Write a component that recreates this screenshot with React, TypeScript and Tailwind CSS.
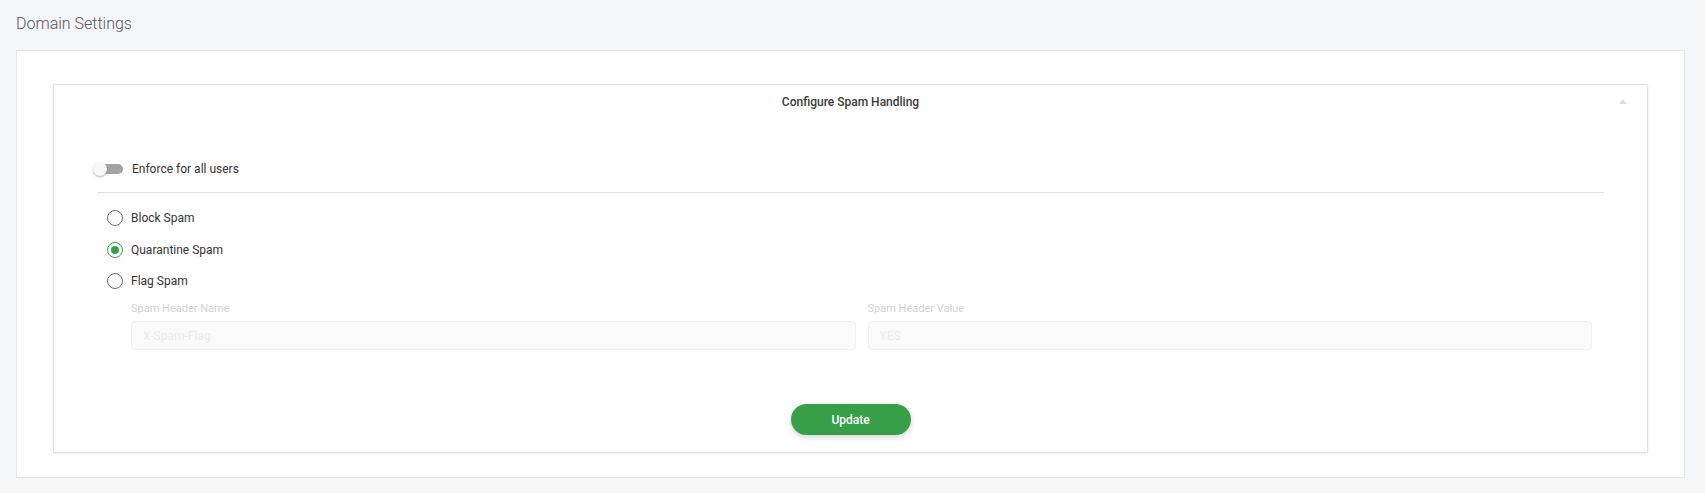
import { useState } from "react";

type SpamMode = "block" | "quarantine" | "flag";

const options: { value: SpamMode; label: string }[] = [
  { value: "block", label: "Block Spam" },
  { value: "quarantine", label: "Quarantine Spam" },
  { value: "flag", label: "Flag Spam" },
];

function Toggle({ on, onChange }: { on: boolean; onChange: (v: boolean) => void }) {
  return (
    <button
      type="button"
      onClick={() => onChange(!on)}
      className={
        "relative w-[26px] h-[10px] rounded-full " +
        (on ? "bg-[#8fce98]" : "bg-[#a3a3a3]")
      }
    >
      <span
        className={
          "absolute top-[-2px] w-[14px] h-[14px] rounded-full shadow-[0_1px_2px_rgba(0,0,0,0.3)] " +
          (on ? "left-[16px] bg-[#379f47]" : "left-[-4px] bg-[#f8f8f8]")
        }
      />
    </button>
  );
}

function Radio({ checked }: { checked: boolean }) {
  return (
    <span
      className={
        "flex items-center justify-center w-[16px] h-[16px] rounded-full border-[1.5px] " +
        (checked ? "border-[#379f47]" : "border-[#6b6b6b]")
      }
    >
      {checked && <span className="w-[8px] h-[8px] rounded-full bg-[#379f47]" />}
    </span>
  );
}

export default function App() {
  const [enforce, setEnforce] = useState(false);
  const [mode, setMode] = useState<SpamMode>("quarantine");

  return (
    <div
      className="min-h-[493px] bg-[#f4f5f9] pt-[12px] pb-[14px]"
      style={{ fontFamily: "Roboto, 'Liberation Sans', sans-serif" }}
    >
      <h1 className="pl-[16px] h-[24px] leading-[24px] text-[16px] font-light text-[#555]">
        Domain Settings
      </h1>

      <div className="mt-[14px] ml-[16px] mr-[20px] bg-white border border-[#e6e6e6] pt-[33px] px-[36px] pb-[24px]">
        <div className="border border-[#e2e2e2] shadow-[0_1px_3px_rgba(0,0,0,0.08)]">
          <div className="relative h-[33px] flex items-center justify-center">
            <span className="text-[12px] font-medium text-[#3a3a3a]">Configure Spam Handling</span>
            <svg
              className="absolute right-[20px] top-[14px]"
              width="8"
              height="5"
              viewBox="0 0 8 5"
            >
              <path d="M0 5 L4 0 L8 5 Z" fill="#dcdcdc" />
            </svg>
          </div>

          <div className="px-[43px] pt-[41px] pb-[17px]">
            <div className="h-[20px] flex items-center">
              <Toggle on={enforce} onChange={setEnforce} />
              <span className="ml-[9px] text-[12px] text-[#333]">Enforce for all users</span>
            </div>

            <div className="mt-[13px] border-t border-[#e0e0e0]" />

            <div className="mt-[15px] flex flex-col gap-[11.5px] pl-[10px]">
              {options.map((o) => (
                <label
                  key={o.value}
                  className="h-[20px] flex items-center gap-[8px] cursor-pointer"
                  onClick={() => setMode(o.value)}
                >
                  <Radio checked={mode === o.value} />
                  <span className="text-[12px] text-[#333]">{o.label}</span>
                </label>
              ))}
            </div>

            <div className="mt-[11px] pl-[34px] pr-[12px] grid grid-cols-2 gap-[12px]">
              <div>
                <div className="h-[14px] leading-[14px] text-[11px] text-[#d2d2d2]">Spam Header Name</div>
                <input
                  disabled
                  placeholder="X-Spam-Flag"
                  className="mt-[5px] w-full h-[29px] px-[11px] rounded-[4px] border border-[#f0f0f0] bg-[#fafafa] text-[12px] placeholder:text-[#eaeaea]"
                />
              </div>
              <div>
                <div className="h-[14px] leading-[14px] text-[11px] text-[#d2d2d2]">Spam Header Value</div>
                <input
                  disabled
                  placeholder="YES"
                  className="mt-[5px] w-full h-[29px] px-[11px] rounded-[4px] border border-[#f0f0f0] bg-[#fafafa] text-[12px] placeholder:text-[#eaeaea]"
                />
              </div>
            </div>

            <div className="mt-[54px] flex justify-center">
              <button
                type="button"
                className="w-[120px] h-[31px] rounded-full bg-[#379f47] text-white text-[12px] font-medium shadow-[0_2px_6px_rgba(0,0,0,0.18)]"
              >
                Update
              </button>
            </div>
          </div>
        </div>
      </div>
    </div>
  );
}
